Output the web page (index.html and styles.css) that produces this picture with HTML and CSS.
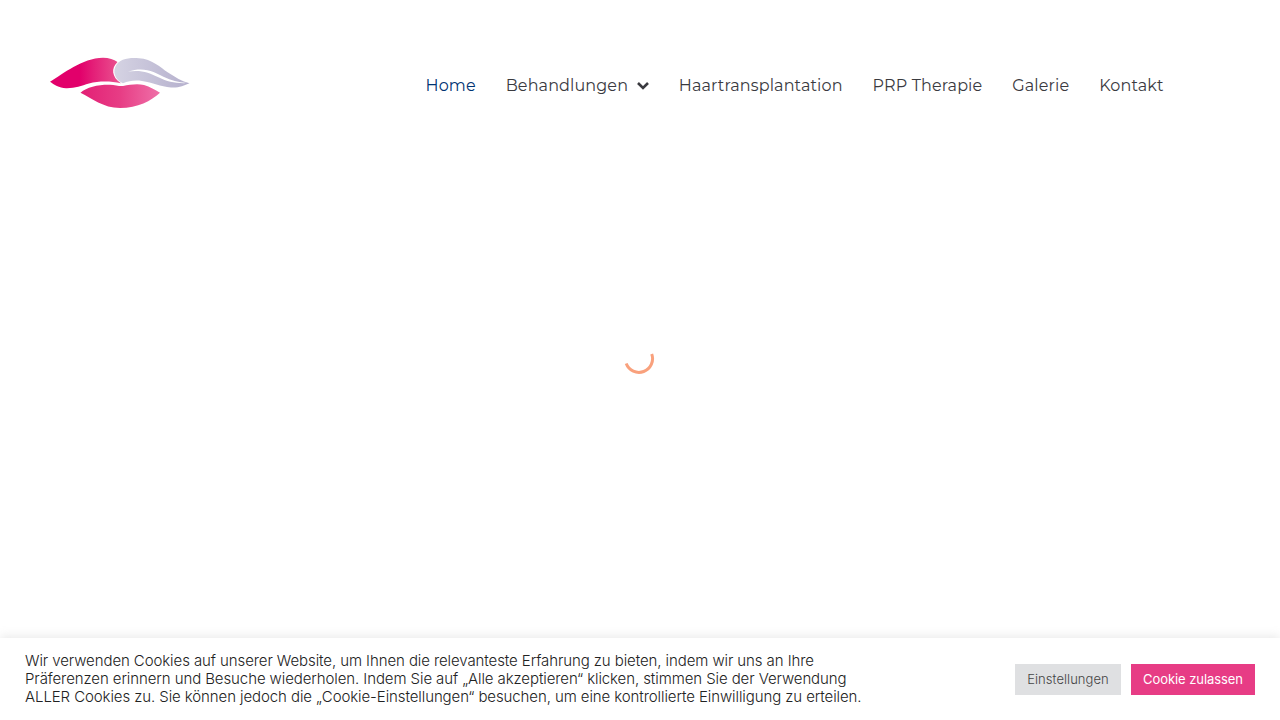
FILE: index.html
```html
<!DOCTYPE html>
<html lang="de">
<head>
<meta charset="utf-8">
<title>Home</title>
<link rel="stylesheet" href="styles.css">
</head>
<body>
<div class="page">
  <header class="header">
    <a class="logo" aria-label="Startseite">
      <svg width="142" height="54" viewBox="49 56 142 54">
        <defs>
          <linearGradient id="upper" x1="0" x2="1"><stop offset=".42" stop-color="#e2006b"/><stop offset=".6" stop-color="#e41d77"/><stop offset="1" stop-color="#ea5591"/></linearGradient>
          <linearGradient id="lower" x1="0" x2="1"><stop offset="0" stop-color="#e31f75"/><stop offset=".5" stop-color="#e73d85"/><stop offset="1" stop-color="#ef70a8"/></linearGradient>
          <linearGradient id="wing" x1="0" x2="1"><stop offset="0" stop-color="#d5d3e3"/><stop offset="1" stop-color="#b5b0cd"/></linearGradient>
        </defs>
        <path fill="url(#upper)" d="M50 81.7C63 74 82 58 103 57.7C109 57.8 114 59.5 117.500 62C111 68 111.500 77 121 83.300C110 81 99 81 89 83.600C81 86 75 88.500 66 88.300C59 88 54 84.500 50 81.700Z"/>
        <path fill="url(#lower)" d="M80.500 92.700C87 87 98 84.500 110 84.700C115 85 119 86.300 123 86C130 84.700 137 83.500 144 85C150 86.500 155 90 160 92.800C151 101 138 108 120 108C103 108 92 98 80.500 92.700Z"/>
        <path fill="url(#wing)" d="M123 83.300C116 80.500 112.500 73 115.300 67C119 58.500 129 57.500 139 58.200C152 59 160 67 168 72.500C175 77 182 81.500 189.500 83.200C184 85.500 179 88 171 87.500C160 86.500 153 82.500 142 81C135 80 129 80.800 123 83.300Z"/>
        <path fill="#fff" d="M128 71.500C145 66 155 72.500 164 77C171 80.500 178 82 187 83.100C175 83.500 167 81.500 159 77.500C149 72.500 141 69.600 128 71.500Z"/>
      </svg>
    </a>
    <nav class="nav">
      <a class="item active">Home</a>
      <a class="item">Behandlungen<svg class="chevron" width="14" height="10" viewBox="0 0 14 10"><path d="M2 2L7 7L12 2"/></svg></a>
      <a class="item">Haartransplantation</a>
      <a class="item">PRP Therapie</a>
      <a class="item">Galerie</a>
      <a class="item">Kontakt</a>
    </nav>
  </header>
  <main class="content">
    <svg class="spinner" width="32" height="32" viewBox="0 0 32 32"><path d="M28.700 9A13.500 13.500 0 0 1 3.200 18.500"/></svg>
  </main>
  <footer class="cookie-bar">
    <p class="notice">Wir verwenden Cookies auf unserer Website, um Ihnen die relevanteste Erfahrung zu bieten, indem wir uns an Ihre<br>Präferenzen erinnern und Besuche wiederholen. Indem Sie auf „Alle akzeptieren“ klicken, stimmen Sie der Verwendung<br>ALLER Cookies zu. Sie können jedoch die „Cookie-Einstellungen“ besuchen, um eine kontrollierte Einwilligung zu erteilen.</p>
    <div class="actions">
      <button class="button settings">Einstellungen</button>
      <button class="button accept">Cookie zulassen</button>
    </div>
  </footer>
</div>
</body>
</html>
```
FILE: styles.css
```css
* { box-sizing: border-box; }
body { margin: 0; background: #fff; font-family: Inter, sans-serif; }
.page { height: 720px; display: flex; flex-direction: column; overflow: hidden; }
.header { height: 170px; flex: none; display: flex; padding: 56px 0 0 49px; }
.logo { width: 376.500px; height: 54px; }
.logo svg, .spinner { display: block; }
.nav { display: flex; gap: 30px; height: 58px; align-items: center; color: #3a3a3f; font: 400 16px Montserrat, Inter, sans-serif; letter-spacing: .12px; }
.item { flex: none; white-space: nowrap; display: flex; align-items: center; }
.active { color: #003373; }
.chevron { margin: 1px -1.300px 0 8px; fill: none; stroke: #3a3a3f; stroke-width: 2.600; }
.content { flex: 1; padding: 175px 0 0 623px; }
.spinner { fill: none; stroke: #f9a17d; stroke-width: 3; }
.cookie-bar { flex: none; height: 82px; display: flex; align-items: center; justify-content: space-between; padding: 0 25px; background: #fff; box-shadow: 0 -1px 10px rgba(172, 171, 171, .3); }
.notice { margin: 0; font-size: 15px; font-weight: 300; line-height: 18px; letter-spacing: -.09px; color: #222; white-space: nowrap; }
.actions { display: flex; gap: 10px; }
.button { border: 0; height: 31px; padding: 0 12px; font: 400 13px/15px Inter, sans-serif; white-space: nowrap; }
.settings { width: 106px; background: #dfe0e2; color: #444; font-weight: 300; letter-spacing: .05px; }
.accept { width: 124px; background: #e73c85; color: #fff; letter-spacing: -.07px; }
```
